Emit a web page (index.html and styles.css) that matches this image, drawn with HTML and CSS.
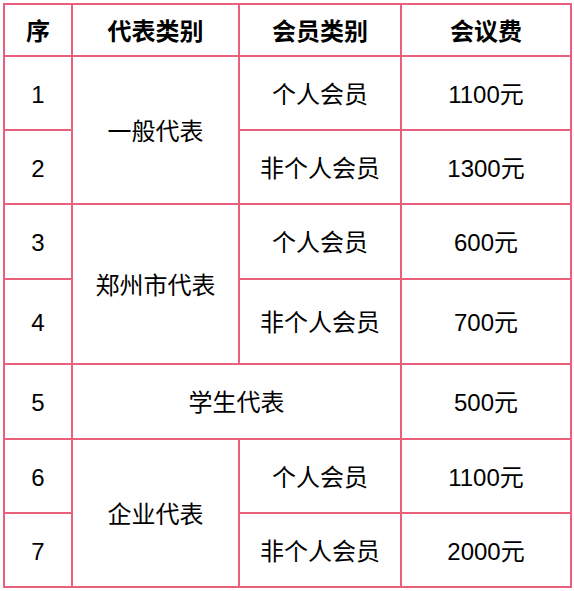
FILE: index.html
```html
<!DOCTYPE html>
<html lang="zh-CN">
<head>
<meta charset="utf-8">
<title>会议费</title>
<link rel="stylesheet" href="styles.css">
</head>
<body>
<div class="fee-table">
  <div class="cell head">序</div>
  <div class="cell head">代表类别</div>
  <div class="cell head">会员类别</div>
  <div class="cell head">会议费</div>

  <div class="cell r1 c1">1</div>
  <div class="cell r1 c2 span-r">一般代表</div>
  <div class="cell r1 c3">个人会员</div>
  <div class="cell r1 c4">1100元</div>
  <div class="cell r2 c1">2</div>
  <div class="cell r2 c3">非个人会员</div>
  <div class="cell r2 c4">1300元</div>

  <div class="cell r3 c1">3</div>
  <div class="cell r3 c2 span-r">郑州市代表</div>
  <div class="cell r3 c3">个人会员</div>
  <div class="cell r3 c4">600元</div>
  <div class="cell r4 c1">4</div>
  <div class="cell r4 c3">非个人会员</div>
  <div class="cell r4 c4">700元</div>

  <div class="cell r5 c1">5</div>
  <div class="cell r5 c2 span-c">学生代表</div>
  <div class="cell r5 c4">500元</div>

  <div class="cell r6 c1">6</div>
  <div class="cell r6 c2 span-r">企业代表</div>
  <div class="cell r6 c3">个人会员</div>
  <div class="cell r6 c4">1100元</div>
  <div class="cell r7 c1">7</div>
  <div class="cell r7 c3">非个人会员</div>
  <div class="cell r7 c4">2000元</div>
</div>
</body>
</html>
```
FILE: styles.css
```css
html, body {
  margin: 0;
  padding: 0;
  background: #ffffff;
}
body {
  padding: 3px 0 0 3px;
  font-family: "Liberation Sans", "Noto Sans CJK SC", sans-serif;
  color: #000000;
}
.fee-table {
  display: grid;
  width: 565px;
  grid-template-columns: 66px 165px 160px 168px;
  grid-template-rows: 50px 72px 72px 73px 83px 73px 72px 72px;
  gap: 2px;
  padding: 2px;
  background: #ea5f7b;
}
.cell {
  background: #ffffff;
  display: flex;
  align-items: center;
  justify-content: center;
  padding-top: 3px;
  font-size: 24px;
  line-height: 1;
}
.head {
  font-weight: bold;
}
.c1 { grid-column: 1; }
.c2 { grid-column: 2; }
.c3 { grid-column: 3; }
.c4 { grid-column: 4; }
.r1 { grid-row: 2; }
.r2 { grid-row: 3; }
.r3 { grid-row: 4; }
.r4 { grid-row: 5; }
.r5 { grid-row: 6; }
.r6 { grid-row: 7; }
.r7 { grid-row: 8; }
.span-r { grid-row-end: span 2; }
.span-c { grid-column: 2 / span 2; }
```
